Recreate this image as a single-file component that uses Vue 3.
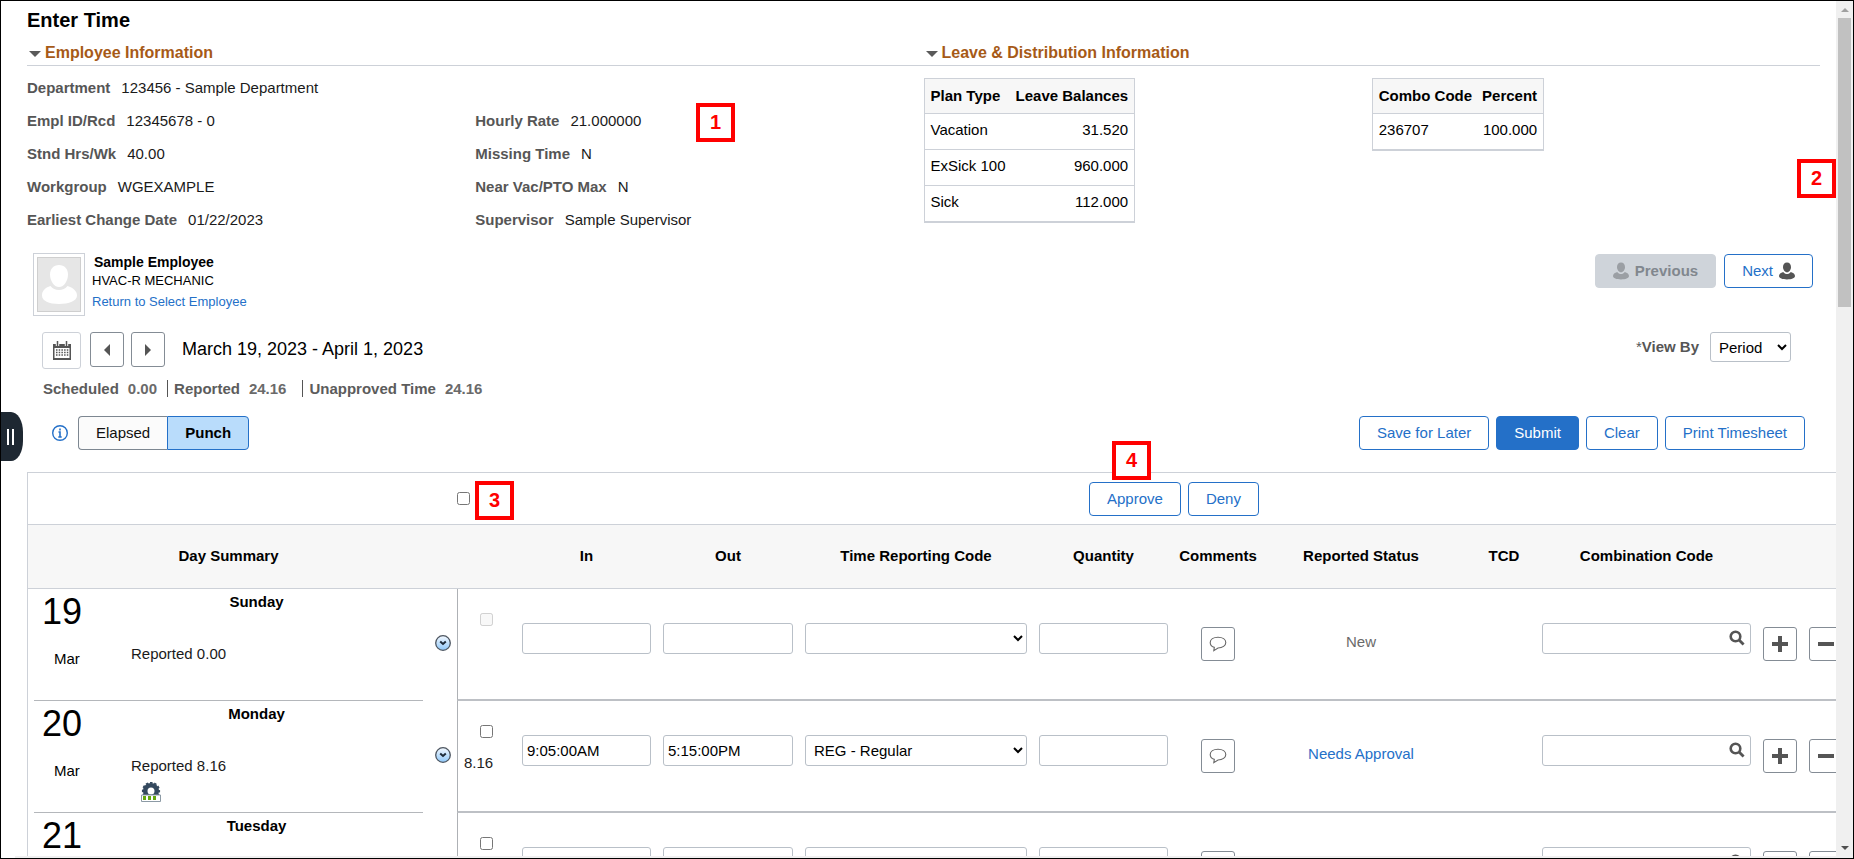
<script setup>
import { ref } from 'vue'

const employeeFields = [
  { label: 'Department', value: '123456 - Sample Department' },
  { label: 'Empl ID/Rcd', value: '12345678 - 0' },
  { label: 'Stnd Hrs/Wk', value: '40.00' },
  { label: 'Workgroup', value: 'WGEXAMPLE' },
  { label: 'Earliest Change Date', value: '01/22/2023' },
]
const payFields = [
  { label: 'Hourly Rate', value: '21.000000' },
  { label: 'Missing Time', value: 'N' },
  { label: 'Near Vac/PTO Max', value: 'N' },
  { label: 'Supervisor', value: 'Sample Supervisor' },
]
const leave = [
  { plan: 'Vacation', balance: '31.520' },
  { plan: 'ExSick 100', balance: '960.000' },
  { plan: 'Sick', balance: '112.000' },
]
const totals = [
  { label: 'Scheduled', value: '0.00' },
  { label: 'Reported', value: '24.16' },
  { label: 'Unapproved Time', value: '24.16' },
]
const days = ref([
  { day: '19', month: 'Mar', name: 'Sunday', reported: '0.00', locked: true, hours: '', timeIn: '', timeOut: '', code: '', status: 'New' },
  { day: '20', month: 'Mar', name: 'Monday', reported: '8.16', processing: true, hours: '8.16', timeIn: '9:05:00AM', timeOut: '5:15:00PM', code: 'REG - Regular', status: 'Needs Approval', link: true },
  { day: '21', month: '', name: 'Tuesday', reported: '', hours: '', timeIn: '', timeOut: '', code: '', status: '' },
])
const viewBy = ref('Period')
const mode = ref('Punch')
</script>

<template>
  <div class="app">
    <main class="content">
      <h1>Enter Time</h1>

      <div class="info">
        <section class="block">
          <h2><button type="button" class="toggle"><svg width="12" height="6" viewBox="0 0 12 6"><path d="M0 0h12L6 6z" fill="#5a5a5a" /></svg>Employee Information</button></h2>
          <div class="halves">
            <dl class="fields">
              <div v-for="f in employeeFields" :key="f.label"><dt>{{ f.label }}</dt><dd>{{ f.value }}</dd></div>
            </dl>
            <dl class="fields second">
              <div v-for="f in payFields" :key="f.label"><dt>{{ f.label }}</dt><dd>{{ f.value }}</dd></div>
            </dl>
            <span class="callout c1">1</span>
          </div>
        </section>
        <section class="block">
          <h2><button type="button" class="toggle"><svg width="12" height="6" viewBox="0 0 12 6"><path d="M0 0h12L6 6z" fill="#5a5a5a" /></svg>Leave &amp; Distribution Information</button></h2>
          <div class="halves tables">
            <table class="mini">
              <thead><tr><th>Plan Type</th><th class="num">Leave Balances</th></tr></thead>
              <tbody><tr v-for="l in leave" :key="l.plan"><td>{{ l.plan }}</td><td class="num">{{ l.balance }}</td></tr></tbody>
            </table>
            <table class="mini">
              <thead><tr><th>Combo Code</th><th class="num">Percent</th></tr></thead>
              <tbody><tr><td>236707</td><td class="num">100.000</td></tr></tbody>
            </table>
          </div>
        </section>
      </div>
      <span class="callout c2">2</span>

      <div class="person">
        <div class="photo">
          <svg width="44" height="55" viewBox="0 0 44 55">
            <rect x=".5" y=".5" width="43" height="54" fill="#e6e6e6" stroke="#cfcfcf" />
            <path d="M22 8c5.500 0 9 4 9 9.500 0 6-3.800 12.500-9 12.500s-9-6.500-9-12.500C13 12 16.500 8 22 8z" fill="#fff" />
            <path d="M13.500 29c2 2.600 5 4 8.500 4s6.500-1.400 8.500-4c5.500 1.500 9.500 5 9.500 9.500 0 5.500-8 8.500-18 8.500S5 44 5 38.500c0-4.500 3-8 8.500-9.500z" fill="#fff" />
          </svg>
        </div>
        <div class="who">
          <strong>Sample Employee</strong>
          <span>HVAC-R MECHANIC</span>
          <a href="#">Return to Select Employee</a>
        </div>
        <div class="nav">
          <button type="button" class="btn disabled" disabled>
            <svg width="16" height="18" viewBox="0 0 18 19" fill="#9b9fa4"><path d="M9 0c2.800 0 4.500 2 4.500 5S11.500 11 9 11 4.500 8 4.500 5 6.200 0 9 0z" /><path d="M4.800 10.500C6 12 7.300 12.800 9 12.800s3-.8 4.200-2.300c3 .8 4.800 2.500 4.800 4.700C18 17.700 14 19 9 19s-9-1.300-9-3.800c0-2.200 1.800-3.900 4.800-4.700z" /></svg>
            Previous
          </button>
          <button type="button" class="btn">
            Next
            <svg width="16" height="18" viewBox="0 0 18 19" fill="#555"><path d="M9 0c2.800 0 4.500 2 4.500 5S11.500 11 9 11 4.500 8 4.500 5 6.200 0 9 0z" /><path d="M4.800 10.500C6 12 7.300 12.800 9 12.800s3-.8 4.200-2.300c3 .8 4.800 2.500 4.800 4.700C18 17.700 14 19 9 19s-9-1.300-9-3.800c0-2.200 1.800-3.900 4.800-4.700z" /></svg>
          </button>
        </div>
      </div>

      <div class="period">
        <button type="button" class="iconbtn calendar" aria-label="Calendar">
          <svg width="18" height="19" viewBox="0 0 18 19"><path d="M0 3h18v16H0zM1.500 7v10h15V7z" fill="#555" fill-rule="evenodd" /><path d="M4.500 0v5M13.500 0v5" stroke="#fff" stroke-width="3.400" /><path d="M4.500 0v5M13.500 0v5" stroke="#555" stroke-width="1.500" /><path d="M3 9h12.500M3 11.500h12.500M3 14h12.500" stroke="#555" stroke-width="1.500" stroke-dasharray="1.500 1.200" /></svg>
        </button>
        <button type="button" class="iconbtn" aria-label="Previous period"><svg width="6" height="12" viewBox="0 0 6 12"><path d="M6 0v12L0 6z" fill="#555" /></svg></button>
        <button type="button" class="iconbtn" aria-label="Next period"><svg width="6" height="12" viewBox="0 0 6 12"><path d="M0 0v12l6-6z" fill="#555" /></svg></button>
        <span class="range">March 19, 2023 - April 1, 2023</span>
        <div class="viewby">
          <label for="viewby"><i>*</i>View By</label>
          <select id="viewby" v-model="viewBy"><option>Period</option><option>Week</option><option>Day</option></select>
        </div>
      </div>

      <div class="totals">
        <span v-for="t in totals" :key="t.label" class="total"><b>{{ t.label }}</b><em>{{ t.value }}</em></span>
      </div>

      <div class="actions">
        <svg class="infoicon" width="16" height="16" viewBox="0 0 16 16"><circle cx="8" cy="8" r="7.300" fill="none" stroke="#2470c8" stroke-width="1.400" /><path d="M8 3.500v2M6.500 7H8v5M6.300 12h3.400" stroke="#2470c8" stroke-width="1.600" fill="none" /></svg>
        <div class="switch">
          <button type="button" :class="{ on: mode === 'Elapsed' }" @click="mode = 'Elapsed'">Elapsed</button>
          <button type="button" :class="{ on: mode === 'Punch' }" @click="mode = 'Punch'">Punch</button>
        </div>
        <div class="commands">
          <button type="button" class="btn">Save for Later</button>
          <button type="button" class="btn primary">Submit</button>
          <button type="button" class="btn">Clear</button>
          <button type="button" class="btn">Print Timesheet</button>
        </div>
      </div>

      <div class="sheet">
        <div class="bulk">
          <div class="selectall"><input type="checkbox" aria-label="Select all"><span class="callout c3">3</span></div>
          <div class="decide">
            <button type="button" class="btn">Approve</button>
            <button type="button" class="btn">Deny</button>
            <span class="callout c4">4</span>
          </div>
        </div>
        <table class="grid">
          <colgroup><col class="w-day"><col class="w-check"><col class="w-in"><col class="w-out"><col class="w-code"><col class="w-qty"><col class="w-comment"><col><col class="w-tcd"><col class="w-combo"><col class="w-btn"><col class="w-btn"></colgroup>
          <thead>
            <tr><th class="daysum">Day Summary</th><th></th><th>In</th><th>Out</th><th>Time Reporting Code</th><th>Quantity</th><th>Comments</th><th>Reported Status</th><th class="tcd">TCD</th><th>Combination Code</th><th></th><th></th></tr>
          </thead>
          <tbody>
            <tr v-for="d in days" :key="d.day">
              <td>
                <div class="daycell">
                  <div class="summary">
                    <div class="date"><span class="big">{{ d.day }}</span><span v-if="d.month" class="month">{{ d.month }}</span></div>
                    <div class="detail">
                      <strong>{{ d.name }}</strong>
                      <span v-if="d.reported">Reported {{ d.reported }}</span>
                      <svg v-if="d.processing" width="20" height="20" viewBox="0 0 20 20">
                        <circle cx="10" cy="9" r="5.800" fill="none" stroke="#34495e" stroke-width="4.600" />
                        <circle cx="10" cy="9" r="8.300" fill="none" stroke="#34495e" stroke-width="1.600" stroke-dasharray="2.600 1.746" stroke-dashoffset="1.300" />
                        <path d="M.5 13h19v6.500H.5z" fill="#fff" stroke="#8c9aa5" />
                        <path d="M2 14h3v4H2zM7 14h3v4H7zM12 14h3v4h-3z" fill="#65a80c" />
                      </svg>
                    </div>
                  </div>
                  <button type="button" class="expand" :aria-label="'Expand ' + d.name">
                    <svg width="16" height="16" viewBox="0 0 16 16"><defs><linearGradient id="orb" x1="0" y1="0" x2="0" y2="1"><stop offset="0" stop-color="#f4f9ff" /><stop offset="1" stop-color="#8fc8fa" /></linearGradient></defs><circle cx="8" cy="8" r="7.300" fill="url(#orb)" stroke="#4d5661" stroke-width="1.300" /><path d="M5.200 6.500 8 9l2.800-2.500" fill="none" stroke="#1d2b3a" stroke-width="2" /></svg>
                  </button>
                </div>
              </td>
              <td class="edge check"><input type="checkbox" :disabled="d.locked" :aria-label="'Select ' + d.name"><span>{{ d.hours }}</span></td>
              <td class="line"><input v-model="d.timeIn" type="text" aria-label="In"></td>
              <td class="line"><input v-model="d.timeOut" type="text" aria-label="Out"></td>
              <td class="line"><select v-model="d.code" aria-label="Time Reporting Code"><option value=""></option><option>REG - Regular</option></select></td>
              <td class="line"><input type="text" aria-label="Quantity"></td>
              <td class="line tool"><button type="button" class="iconbtn" aria-label="Comments"><svg width="18" height="16" viewBox="0 0 18 16"><path d="M9 1.200c4.600 0 7.800 2.200 7.800 5.300S13.600 12 9 12l-4.200 2.600.5-3.200C2.600 10.600 1.200 8.800 1.200 6.500 1.200 3.400 4.400 1.200 9 1.200z" fill="none" stroke="#666" stroke-width="1.100" /></svg></button></td>
              <td class="line status"><a v-if="d.link" href="#">{{ d.status }}</a><template v-else>{{ d.status }}</template></td>
              <td class="line"></td>
              <td class="line"><div class="lookup"><input type="text" aria-label="Combination Code"><svg width="16" height="16" viewBox="0 0 16 16"><circle cx="6.500" cy="6.500" r="4.800" fill="none" stroke="#555" stroke-width="2.600" /><path d="m9.800 9.800 4.800 4.800" stroke="#555" stroke-width="2.800" /></svg></div></td>
              <td class="line tool"><button type="button" class="iconbtn" aria-label="Add row"><svg width="16" height="16" viewBox="0 0 16 16"><path d="M8 0v16M0 8h16" stroke="#555" stroke-width="4" /></svg></button></td>
              <td class="line tool"><button type="button" class="iconbtn" aria-label="Delete row"><svg width="16" height="16" viewBox="0 0 16 16"><path d="M0 8h16" stroke="#555" stroke-width="4" /></svg></button></td>
            </tr>
          </tbody>
        </table>
      </div>

      <button type="button" class="handle" aria-label="Open side panel"></button>
      <div class="hbar"></div>
    </main>

    <div class="scroll">
      <svg width="8" height="4" viewBox="0 0 8 4"><path d="M0 4h8L4 0z" fill="#a0a0a0" /></svg>
      <div class="thumb"></div>
      <svg class="down" width="8" height="4" viewBox="0 0 8 4"><path d="M0 0h8L4 4z" fill="#505050" /></svg>
    </div>
  </div>
</template>

<style>
html, body { margin: 0; overflow: hidden; }
</style>

<style scoped>
.app, .app * { box-sizing: border-box; }
.app { display: flex; height: 100vh; border: 1px solid #000; background: #fff; color: #111; font: 15px/20px "Liberation Sans", Arial, sans-serif; }
.app button, .app input, .app select { font: inherit; }
.content { position: relative; flex: 1; min-width: 0; overflow: hidden; }
a { color: #2470c8; text-decoration: none; }
h1 { margin: 0; padding-left: 26px; font-size: 20px; line-height: 39px; color: #000; }
h2 { margin: 0; height: 26px; border-bottom: 1px solid #cdd1d8; font-size: 16px; line-height: 25px; }
.toggle { display: flex; align-items: center; gap: 4px; height: 25px; padding: 0 0 0 2px; border: 0; background: none; color: #a65a17; }
.app .toggle { font-weight: bold; }
.toggle svg { margin-top: 2px; }

.info { display: grid; grid-template-columns: 1fr 1fr; padding: 0 16px 0 26px; }
.halves { position: relative; display: grid; grid-template-columns: 1fr 1fr; align-items: start; padding-top: 5px; }
.tables { padding-top: 12px; }
.fields { margin: 0; }
.fields div { display: flex; align-items: center; gap: 11px; height: 33px; }
.second { padding-top: 33px; }
dt { font-weight: bold; color: #565656; }
dd { margin: 0; color: #1a1a1a; }
.mini { border-collapse: separate; border-spacing: 0; border: 1px solid #cdd1d8; color: #000; justify-self: start; }
.mini th { height: 35px; padding: 0 6px; background: #f7f7f7; border-bottom: 1px solid #cdd1d8; text-align: left; }
.mini td { height: 36px; padding: 0 6px 4px; border-bottom: 1px solid #cdd1d8; }
.mini .num { padding-left: 8px; text-align: right; }
.mini th:first-child, .mini td:first-child { padding-right: 2px; }

.callout { position: absolute; width: 39px; height: 39px; border: 4px solid #f00; background: #fff; color: #f00; font-size: 20px; font-weight: bold; line-height: 31px; text-align: center; }
.c1 { top: 37px; left: 669px; }
.c2 { top: 158px; right: 0; }
.c3 { top: -11px; left: 18px; }
.c4 { top: -41px; left: 23px; }

.btn { display: inline-flex; align-items: center; justify-content: center; gap: 6px; height: 34px; padding: 0 17px; border: 1px solid #2470c8; border-radius: 4px; background: #fff; color: #2470c8; white-space: nowrap; }
.primary { background: #2470c8; color: #fff; }
.app .disabled { border-color: #cfd4da; background: #cfd4da; color: #81878e; font-weight: bold; }
.iconbtn { display: inline-flex; align-items: center; justify-content: center; width: 34px; height: 34px; padding: 0; border: 1px solid #848c95; border-radius: 3px; background: #fff; }

.person { display: flex; align-items: flex-start; padding: 17px 23px 0 32px; }
.photo { width: 52px; height: 63px; padding: 3px; border: 1px solid #cdd1d8; }
.photo svg { display: block; }
.who { display: flex; flex-direction: column; margin-left: 7px; font-size: 13px; color: #000; }
.who strong { padding-left: 2px; font-size: 14px; line-height: 18px; }
.who a { line-height: 22px; }
.nav { display: flex; gap: 8px; margin-left: auto; padding-top: 1px; }

.period { display: flex; align-items: flex-start; padding: 16px 45px 0 41px; }
.period .iconbtn { height: 35px; margin-right: 7px; }
.period .calendar { width: 39px; height: 37px; margin-right: 9px; border-color: #cdd1d8; }
.range { margin-left: 10px; font-size: 18px; line-height: 34px; color: #000; }
.viewby { display: flex; align-items: center; gap: 11px; margin-left: auto; }
.viewby label { color: #565656; font-weight: bold; }
.viewby i { font-style: normal; font-weight: normal; }
select, input[type="text"] { width: 100%; height: 31px; margin: 0; padding: 0 4px; border: 1px solid #b9c0c8; border-radius: 3px; background: #fff; color: #000; }
.viewby select { width: 81px; height: 30px; }

.totals { display: flex; padding: 11px 0 0 42px; line-height: 17px; color: #5c5c5c; }
.total { display: flex; gap: 9px; padding-right: 10px; }
.total + .total { padding-left: 6px; border-left: 1px solid #555; }
.total:nth-child(2) { padding-right: 16px; }
.total em { font-style: normal; font-weight: bold; color: #6a6a6a; }

.actions { display: flex; align-items: center; padding: 19px 31px 0 51px; }
.switch { display: flex; margin-left: 10px; }
.switch button { height: 34px; padding: 0 17px; border: 1px solid #7d8791; border-right: 0; border-radius: 4px 0 0 4px; background: #fbfbfb; color: #111; }
.switch button + button { border-right: 1px solid #7d8791; border-radius: 0 4px 4px 0; }
.app .switch .on { border: 1px solid #2470c8; background: #b9dcfb; font-weight: bold; color: #000; }
.commands { display: flex; gap: 7px; margin-left: auto; }

.sheet { margin: 22px 0 0 26px; border: 1px solid #cdd1d8; border-right: 0; }
.bulk { display: flex; align-items: center; height: 52px; border-bottom: 1px solid #cdd1d8; }
.selectall { position: relative; flex: 0 0 632px; height: 13px; margin-left: 429px; }
.decide { position: relative; display: flex; gap: 7px; }
input[type="checkbox"] { display: block; width: 13px; height: 13px; margin: 0; }
.grid { width: 100%; min-width: 1821px; table-layout: fixed; border-collapse: separate; border-spacing: 0; }
.w-day { width: 429px; } .w-check { width: 59px; } .w-in, .w-qty { width: 141px; } .w-out { width: 142px; }
.w-code { width: 234px; } .w-comment { width: 88px; } .w-tcd { width: 76px; } .w-combo { width: 221px; } .w-btn { width: 46px; }
.grid th { height: 64px; padding: 0 0 2px; background: #f7f7f7; border-bottom: 1px solid #cdd1d8; color: #000; white-space: nowrap; }
.grid th.daysum { padding-right: 28px; }
.grid th.tcd { padding-left: 12px; }
.grid td { height: 112px; padding: 0; vertical-align: top; }
.grid .line { padding: 34px 6px 0; border-bottom: 2px solid #bdc0c5; }
.grid .edge { border-left: 1px solid #aeb1b5; border-bottom: 2px solid #bdc0c5; }
.grid .tool { padding-top: 38px; text-align: center; }
.grid .status { padding-top: 43px; text-align: center; color: #6a6a6a; }
.check input { margin: 24px 0 0 22px; }
.check span { display: block; padding: 15px 0 0 6px; color: #222; }
.daycell { display: flex; height: 112px; }
.summary { display: flex; width: 389px; margin-left: 6px; border-bottom: 1px solid #b4b7bb; }
.date { display: flex; flex-direction: column; width: 97px; padding-left: 8px; color: #000; }
.big { padding-top: 2px; font-size: 36px; line-height: 42px; }
.month { padding: 16px 0 0 12px; }
.detail { display: flex; flex: 1; flex-direction: column; padding: 3px 0 0; color: #1a1a1a; }
.detail strong { align-self: center; margin-right: 41px; margin-bottom: 32px; color: #000; }
.detail svg { margin: 6px 0 0 10px; }
.expand { align-self: flex-start; margin: 46px 0 0 12px; padding: 0; border: 0; background: none; }
.expand svg { display: block; }
.lookup { position: relative; }
.lookup svg { position: absolute; top: 7px; right: 6px; }
.tool svg { display: block; }

.handle { position: absolute; top: 411px; left: 0; display: flex; align-items: center; justify-content: center; gap: 3px; width: 22px; height: 49px; padding: 0 4px 0 0; border: 0; border-radius: 0 12px 12px 0 / 0 20px 20px 0; background: #1e2832; }
.handle::before, .handle::after { content: ""; width: 2px; height: 16px; background: #fff; }
.hbar { position: absolute; right: 0; bottom: 0; left: 14px; height: 2px; background: #f0f0f0; }
.scroll { display: flex; flex: 0 0 17px; flex-direction: column; align-items: center; padding-top: 7px; background: #f0f0f0; }
.thumb { width: 13px; height: 34%; margin-top: 6px; background: #c1c1c1; }
.down { margin: auto 0 8px; }
</style>
